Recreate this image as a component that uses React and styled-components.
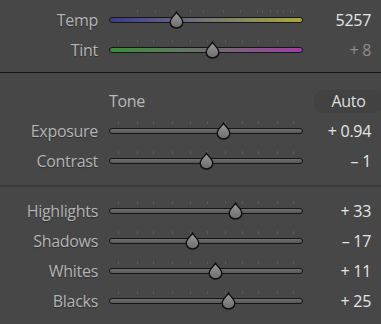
import React from "react";
import styled, { createGlobalStyle } from "styled-components";

const GlobalStyle = createGlobalStyle`
  html, body {
    margin: 0;
    padding: 0;
    background: #474747;
  }
  body {
    font-family: "Open Sans", "Noto Sans", sans-serif;
  }
`;

const TRACK_W = 194;

const Panel = styled.div`
  width: 381px;
  height: 324px;
  background: #474747;
  overflow: hidden;
`;

const Section = styled.div`
  padding: ${(p) => p.$pad || "0"};
`;

const Divider = styled.div`
  height: ${(p) => (p.$strong ? "1px" : "2px")};
  background: ${(p) => (p.$strong ? "#151515" : "#3b3b3b")};
`;

const Row = styled.div`
  display: grid;
  grid-template-columns: 98px ${TRACK_W}px 1fr;
  column-gap: 11px;
  align-items: center;
  height: 30px;
  padding-right: 11px;
`;

const Label = styled.span`
  text-align: right;
  font-size: 16px;
  color: #b4b4b4;
  letter-spacing: -0.3px;
  text-shadow: 0 1px 1px rgba(0, 0, 0, 0.35);
`;

const Value = styled.span`
  justify-self: end;
  font-size: 16px;
  letter-spacing: -0.3px;
  color: ${(p) => (p.$dim ? "#8e8e8e" : "#e6e6e6")};
  white-space: pre;
  margin-right: -1px;
`;

const Heading = styled.span`
  font-size: 16px;
  letter-spacing: -0.3px;
  color: #b8b8b8;
  justify-self: start;
`;

const AutoButton = styled.button`
  justify-self: end;
  width: 69px;
  height: 23px;
  margin-right: -6px;
  border: none;
  border-radius: 9px;
  background: #424242;
  color: #dedede;
  font-family: inherit;
  font-size: 16px;
  letter-spacing: -0.3px;
  padding: 0;
`;

const TrackWrap = styled.div`
  position: relative;
  height: 30px;
`;

const Track = styled.div`
  position: absolute;
  left: 0;
  right: 0;
  top: 12px;
  height: 4px;
  border: 1px solid #161616;
  border-radius: 3px;
  background: ${(p) => p.$bg || "linear-gradient(#6e6e6e, #585858)"};
`;

const Tick = styled.div`
  position: absolute;
  top: 5px;
  width: 1px;
  height: 3px;
  background: #595959;
`;

const Thumb = styled.svg`
  position: absolute;
  top: 6px;
  width: 15px;
  height: 18px;
  margin-left: -7.5px;
`;

const evenTicks = [9, 28, 44, 63, 81, 98, 116, 133, 149, 168, 184];
const tempTicks = [28, 46, 63, 81, 94, 114, 131, 148, 153, 161, 168, 174, 181, 184];

const Slider = ({ pos, bg, ticks = evenTicks }) => (
  <TrackWrap>
    {ticks.map((t) => (
      <Tick key={t} style={{ left: t }} />
    ))}
    <Track $bg={bg} />
    <Thumb viewBox="0 0 15 18" style={{ left: pos - 109 }}>
      <defs>
        <linearGradient id="thumbFill" x1="0" y1="0" x2="0" y2="1">
          <stop offset="0" stopColor="#9a9a9a" />
          <stop offset="1" stopColor="#6c6c6c" />
        </linearGradient>
      </defs>
      <path
        d="M7.5 1.2 C8.6 3.6 13.8 7.2 13.8 11.2 C13.8 14.6 11 17 7.5 17 C4 17 1.2 14.6 1.2 11.2 C1.2 7.2 6.4 3.6 7.5 1.2 Z"
        fill="url(#thumbFill)"
        stroke="#0e0e0e"
        strokeWidth="1.4"
      />
    </Thumb>
  </TrackWrap>
);

const SliderRow = ({ label, pos, value, dim, bg, ticks }) => (
  <Row>
    <Label>{label}</Label>
    <Slider pos={pos} bg={bg} ticks={ticks} />
    <Value $dim={dim}>{value}</Value>
  </Row>
);

const App = () => (
  <Panel>
    <GlobalStyle />
    <Section $pad="5px 0 7px">
      <SliderRow
        label="Temp"
        pos={176}
        value="5257"
        ticks={tempTicks}
        bg="linear-gradient(90deg, #3a3a8c 0%, #6a6a80 40%, #8a8a60 70%, #a8a838 100%)"
      />
      <SliderRow
        label="Tint"
        pos={212}
        value="+ 8"
        dim
        bg="linear-gradient(90deg, #3c8c3c 0%, #5f7a5f 35%, #7a627a 65%, #a43ca4 100%)"
      />
    </Section>
    <Divider $strong />
    <Section $pad="13px 0 9px">
      <Row>
        <span />
        <Heading>Tone</Heading>
        <AutoButton>Auto</AutoButton>
      </Row>
      <SliderRow label="Exposure" pos={223} value="+ 0.94" />
      <SliderRow label="Contrast" pos={206} value="– 1" />
    </Section>
    <Divider />
    <Section $pad="9px 0 0">
      <SliderRow label="Highlights" pos={235} value="+ 33" />
      <SliderRow label="Shadows" pos={192} value="– 17" />
      <SliderRow label="Whites" pos={215} value="+ 11" />
      <SliderRow label="Blacks" pos={228} value="+ 25" />
    </Section>
  </Panel>
);

export default App;
